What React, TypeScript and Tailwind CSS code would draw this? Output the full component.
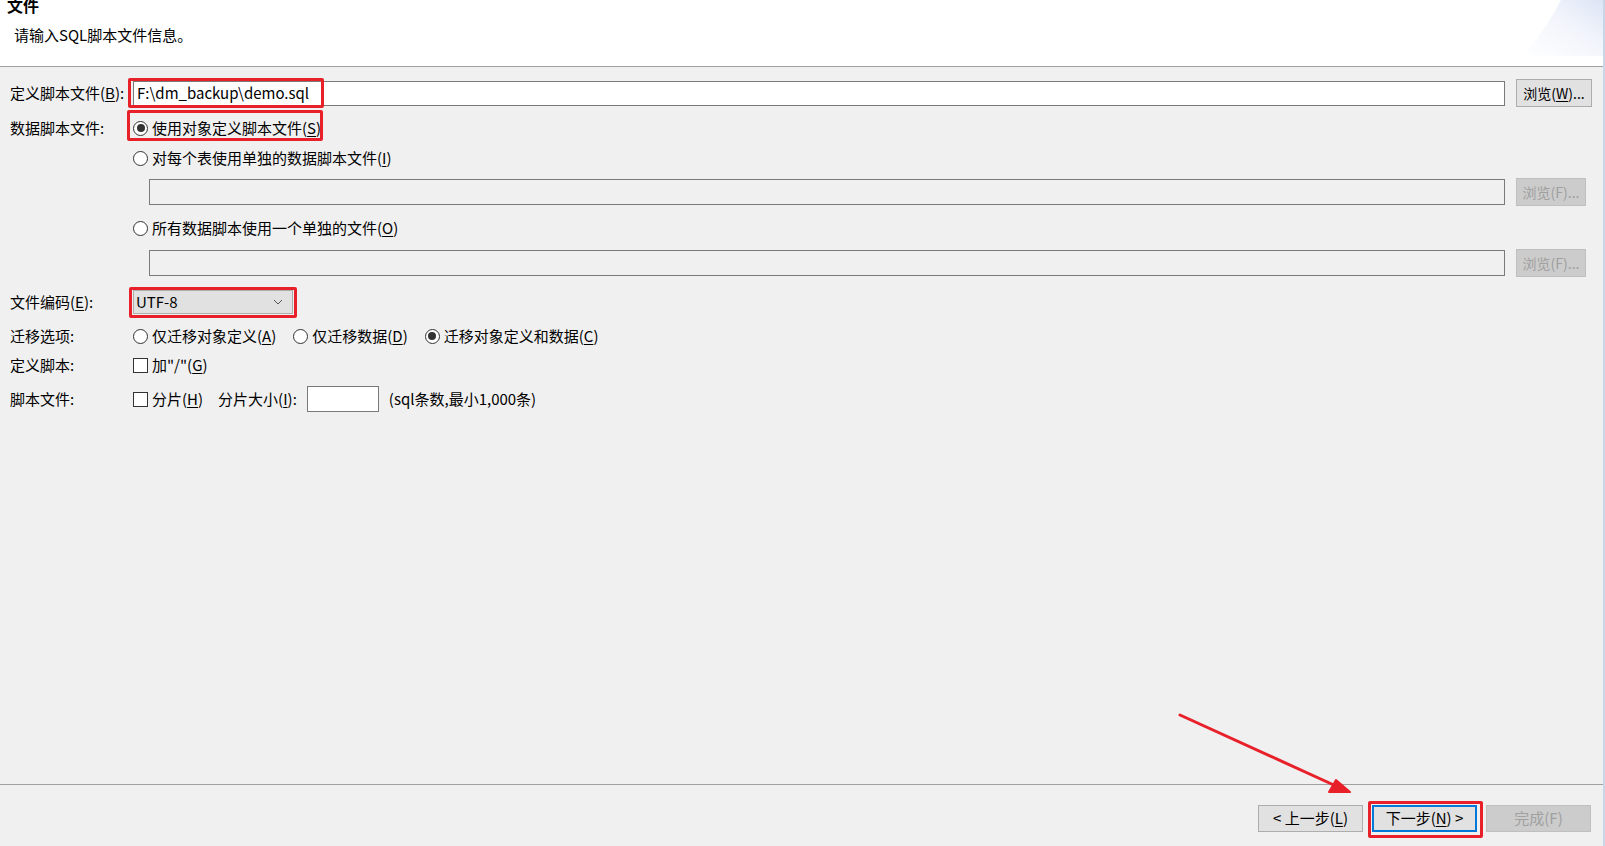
import React from 'react';

const font = "font-['Noto_Sans_CJK_SC','Noto_Sans',sans-serif]";

function U({ children }: { children: React.ReactNode }) {
  return <span className="underline underline-offset-2">{children}</span>;
}

function Radio({ checked }: { checked?: boolean }) {
  return (
    <span className="flex h-[15px] w-[15px] shrink-0 items-center justify-center rounded-full border border-[#333] bg-white">
      {checked && <span className="h-[8px] w-[8px] rounded-full bg-[#333]" />}
    </span>
  );
}

function Check() {
  return <span className="h-[15px] w-[15px] shrink-0 border border-[#333] bg-white" />;
}

function Label({ children }: { children?: React.ReactNode }) {
  return <div className="w-[123px] shrink-0">{children}</div>;
}

function BrowseBtn({ disabled, children }: { disabled?: boolean; children: React.ReactNode }) {
  return disabled ? (
    <div className="ml-[11px] mr-[6px] flex h-[28px] w-[70px] items-center justify-center border border-[#bfbfbf] bg-[#cccccc] text-[14px] text-[#a0a0a0]">
      {children}
    </div>
  ) : (
    <div className="ml-[11px] flex h-[28px] w-[76px] items-center justify-center border border-[#adadad] bg-[#e1e1e1] text-[14px]">
      {children}
    </div>
  );
}

export default function App() {
  return (
    <div className={`relative flex h-[846px] w-[1605px] flex-col overflow-hidden border-r-2 border-[#c9d6e8] bg-[#f0f0f0] text-[15px] text-black ${font}`}>
      {/* header */}
      <div className="relative h-[67px] shrink-0 border-b border-[#a0a0a0] bg-white">
        <div className="-mt-[4px] pl-[7px] text-[16px] font-bold leading-[18px]">文件</div>
        <div className="mt-[11px] pl-[14px] leading-[20px]">请输入SQL脚本文件信息。</div>
        <svg className="absolute right-0 top-0" width="90" height="56" viewBox="0 0 90 56">
          <defs>
            <linearGradient id="hg" x1="0" y1="1" x2="1" y2="0">
              <stop offset="0" stopColor="#ffffff" />
              <stop offset="0.6" stopColor="#f1f4fb" />
              <stop offset="1" stopColor="#dce4f5" />
            </linearGradient>
          </defs>
          <path d="M48 0 Q30 34 10 56 L90 56 L90 0 Z" fill="url(#hg)" />
        </svg>
      </div>

      {/* form */}
      <div className="flex flex-1 flex-col pl-[10px] pr-[11px] pt-[12px]">
        <div className="flex h-[28px] items-center">
          <Label>
            定义脚本文件(<U>B</U>):
          </Label>
          <div className="relative flex h-[25px] flex-1 items-center border border-[#7a7a7a] bg-white pl-[3px] text-[15px]">
            F:\dm_backup\demo.sql
            <div className="pointer-events-none absolute -left-[6px] -top-[4px] h-[30px] w-[196px] rounded-[2px] border-[3px] border-[#e8202a]" />
          </div>
          <BrowseBtn>
            浏览(<U>W</U>)...
          </BrowseBtn>
        </div>

        <div className="mt-[7px] flex h-[28px] items-center">
          <Label>数据脚本文件:</Label>
          <div className="relative flex items-center gap-[4px]">
            <Radio checked />
            <span>
              使用对象定义脚本文件(<U>S</U>)
            </span>
            <div className="pointer-events-none absolute -left-[6px] -top-[7px] h-[31px] w-[196px] rounded-[2px] border-[3px] border-[#e8202a]" />
          </div>
        </div>

        <div className="mt-[2px] flex h-[28px] items-center">
          <Label />
          <div className="flex items-center gap-[4px]">
            <Radio />
            <span>
              对每个表使用单独的数据脚本文件(<U>I</U>)
            </span>
          </div>
        </div>

        <div className="mt-[6px] flex h-[28px] items-center">
          <Label />
          <div className="ml-[16px] h-[26px] flex-1 border border-[#7a7a7a] bg-[#f0f0f0]" />
          <BrowseBtn disabled>浏览(F)...</BrowseBtn>
        </div>

        <div className="mt-[8px] flex h-[28px] items-center">
          <Label />
          <div className="flex items-center gap-[4px]">
            <Radio />
            <span>
              所有数据脚本使用一个单独的文件(<U>O</U>)
            </span>
          </div>
        </div>

        <div className="mt-[7px] flex h-[28px] items-center">
          <Label />
          <div className="ml-[16px] h-[26px] flex-1 border border-[#7a7a7a] bg-[#f0f0f0]" />
          <BrowseBtn disabled>浏览(F)...</BrowseBtn>
        </div>

        <div className="mt-[11px] flex h-[28px] items-center">
          <Label>
            文件编码(<U>E</U>):
          </Label>
          <div className="relative flex h-[24px] w-[160px] items-center justify-between border border-[#adadad] bg-[#e1e1e1] pl-[2px] pr-[9px]">
            <span>UTF-8</span>
            <svg width="10" height="6" viewBox="0 0 10 6">
              <path d="M1 1 L5 5 L9 1" fill="none" stroke="#555" strokeWidth="1" />
            </svg>
            <div className="pointer-events-none absolute -left-[5px] -top-[4px] h-[31px] w-[168px] rounded-[2px] border-[3px] border-[#e8202a]" />
          </div>
        </div>

        <div className="mt-[6px] flex h-[28px] items-center">
          <Label>迁移选项:</Label>
          <div className="flex items-center gap-[4px]">
            <Radio />
            <span>
              仅迁移对象定义(<U>A</U>)
            </span>
          </div>
          <div className="ml-[17px] flex items-center gap-[4px]">
            <Radio />
            <span>
              仅迁移数据(<U>D</U>)
            </span>
          </div>
          <div className="ml-[17px] flex items-center gap-[4px]">
            <Radio checked />
            <span>
              迁移对象定义和数据(<U>C</U>)
            </span>
          </div>
        </div>

        <div className="mt-[1px] flex h-[28px] items-center">
          <Label>定义脚本:</Label>
          <div className="flex items-center gap-[4px]">
            <Check />
            <span>
              加"/"(<U>G</U>)
            </span>
          </div>
        </div>

        <div className="mt-[6px] flex h-[28px] items-center">
          <Label>脚本文件:</Label>
          <div className="flex items-center gap-[4px]">
            <Check />
            <span>
              分片(<U>H</U>)
            </span>
          </div>
          <span className="ml-[15px]">
            分片大小(<U>I</U>):
          </span>
          <div className="ml-[10px] h-[26px] w-[72px] border border-[#7a7a7a] bg-white" />
          <span className="ml-[10px]">(sql条数,最小1,000条)</span>
        </div>
      </div>

      {/* footer */}
      <div className="flex h-[62px] shrink-0 justify-end gap-[9px] border-t border-[#a0a0a0] pr-[12px] pt-[20px]">
        <div className="flex h-[27px] w-[105px] items-center justify-center border border-[#adadad] bg-[#e1e1e1]">
          &lt; 上一步(<U>L</U>)
        </div>
        <div className="relative flex h-[27px] w-[105px] items-center justify-center border-2 border-[#0078d7] bg-[#e1e1e1]">
          下一步(<U>N</U>) &gt;
          <div className="pointer-events-none absolute -left-[6px] -top-[6px] h-[37px] w-[115px] rounded-[2px] border-[3px] border-[#e8202a]" />
        </div>
        <div className="flex h-[27px] w-[105px] items-center justify-center border border-[#bfbfbf] bg-[#cccccc] text-[#a0a0a0]">
          完成(F)
        </div>
      </div>

      {/* annotation arrow */}
      <svg className="pointer-events-none absolute left-0 top-0" width="1605" height="846">
        <line x1="1180" y1="715" x2="1336" y2="786" stroke="#e8202a" strokeWidth="3" strokeLinecap="round" />
        <path d="M1350 792 L1329 792 L1336 780 Z" fill="#e8202a" stroke="#e8202a" strokeWidth="2" strokeLinejoin="round" />
      </svg>
    </div>
  );
}
